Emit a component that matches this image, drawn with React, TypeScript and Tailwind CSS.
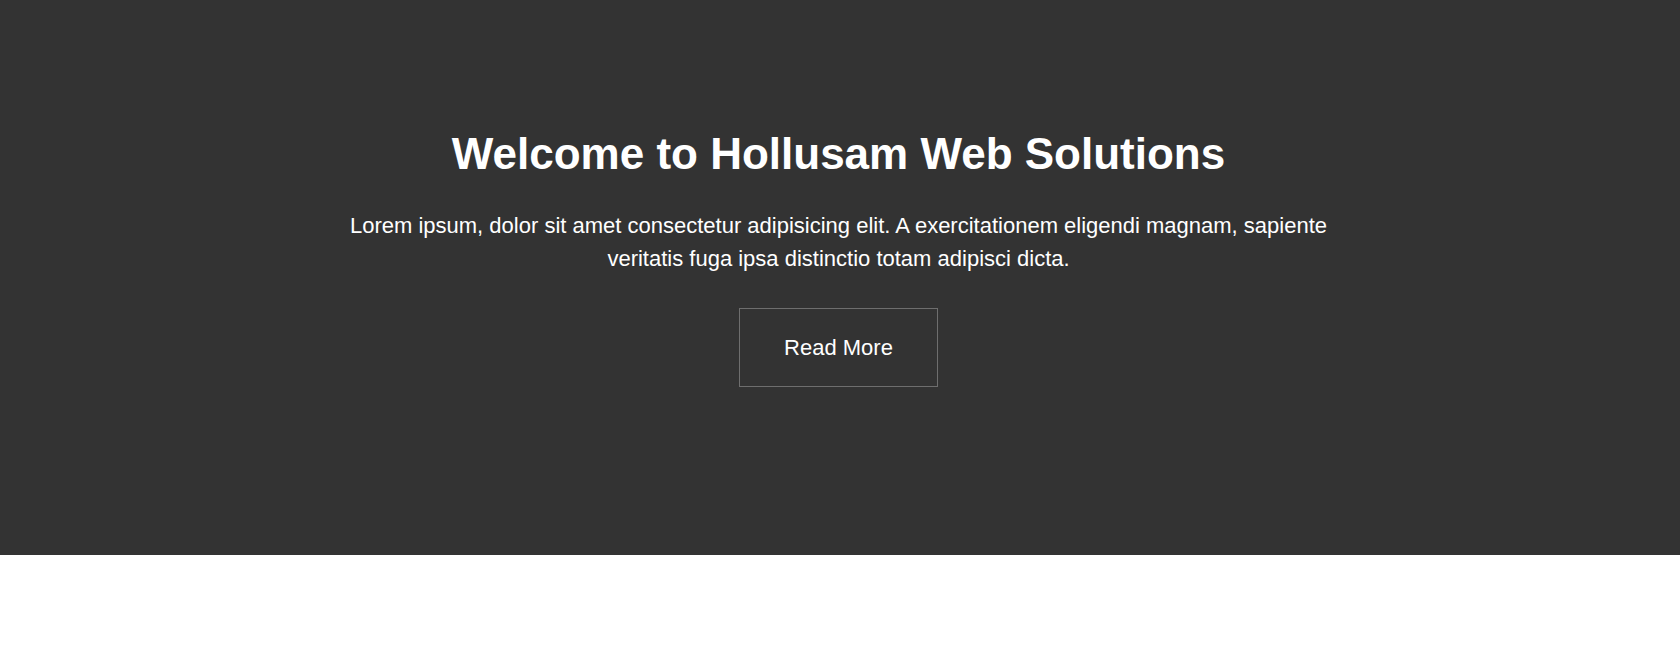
export default function App() {
  return (
    <div className="min-h-[648px] bg-white" style={{ fontFamily: '"Liberation Sans", Arial, sans-serif' }}>
      {/* Hero */}
      <section className="flex h-[555px] flex-col items-center bg-[#333333] pt-[128px] pr-[3px] text-center text-white">
        <h1 className="text-[44px] font-bold leading-[1.2]">Welcome to Hollusam Web Solutions</h1>
        <p className="mt-[28px] max-w-[1000px] text-[22px] leading-[33px]">
          Lorem ipsum, dolor sit amet consectetur adipisicing elit. A exercitationem eligendi magnam, sapiente
          veritatis fuga ipsa distinctio totam adipisci dicta.
        </p>
        <button className="mt-[33px] border border-[#6e6e6e] px-[44px] py-[22px] text-[22px] leading-[33px] text-white">
          Read More
        </button>
      </section>
    </div>
  );
}
